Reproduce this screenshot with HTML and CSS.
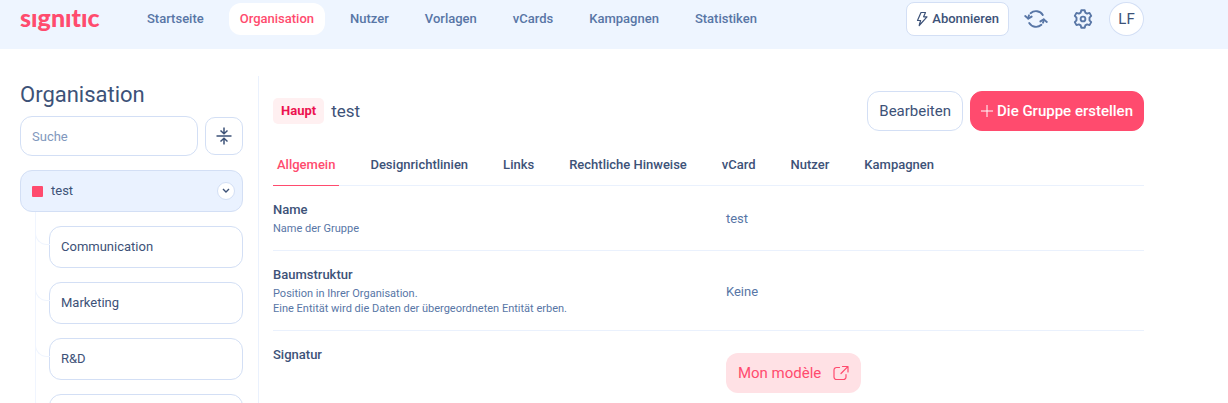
FILE: index.html
```html
<!DOCTYPE html>
<html lang="de">
<head>
    <meta charset="UTF-8">
    <meta name="viewport" content="width=device-width, initial-scale=1.0">
    <title>Organisation</title>
    <link rel="stylesheet" href="styles.css">
</head>
<body>
    <header class="topbar">
        <a class="logo" href="#" aria-label="signitic">sıgnıtıc</a>
        <nav class="nav">
            <a class="nav-link" href="#">Startseite</a>
            <a class="nav-link active" href="#">Organisation</a>
            <a class="nav-link" href="#">Nutzer</a>
            <a class="nav-link" href="#">Vorlagen</a>
            <a class="nav-link" href="#">vCards</a>
            <a class="nav-link" href="#">Kampagnen</a>
            <a class="nav-link" href="#">Statistiken</a>
        </nav>
        <div class="topbar-actions">
            <button class="btn-subscribe">
                <svg width="12" height="16" viewBox="0 0 12 16" fill="none" stroke="currentColor" stroke-width="1.2" stroke-linejoin="round"><path d="M5 1.5h4.5L7.6 5.8H11L3.2 14.5l1.4-5H1.5z"/></svg>
                Abonnieren
            </button>
            <button class="btn-icon" aria-label="Synchronisieren">
                <svg width="24" height="20" viewBox="0 0 24 20" fill="none" stroke="currentColor" stroke-width="1.9" stroke-linecap="round" stroke-linejoin="round"><path d="M6.600 4.200A8 8 0 0 1 18.800 6M17.400 15.800A8 8 0 0 1 5.200 14"/><path d="M4.200 9.500A8 8 0 0 1 5 6.300M19.800 10.500A8 8 0 0 1 19 13.700"/><path d="M1.200 7l3 2.600L7.600 7.600M16.400 12.400l3.400-2 3 2.600"/></svg>
            </button>
            <button class="btn-icon" aria-label="Einstellungen">
                <svg width="20" height="20" viewBox="0 0 20 20" fill="none" stroke="currentColor" stroke-width="1.9" stroke-linejoin="round"><path d="M8.3 1.2h3.4l.6 2.4 1.8 1 2.4-.7 1.7 3-1.7 1.800v2.600l1.700 1.800-1.700 3-2.400-.7-1.800 1-.6 2.400H8.300l-.6-2.400-1.800-1-2.400.7-1.700-3 1.700-1.800V8.700L1.800 6.900l1.700-3 2.400.7 1.800-1z"/><circle cx="10" cy="10" r="2.4"/></svg>
            </button>
            <button class="avatar">LF</button>
        </div>
    </header>

    <div class="page">
        <aside class="sidebar">
            <h1 class="sidebar-title">Organisation</h1>
            <div class="search">
                <input class="search-input" type="text" placeholder="Suche" aria-label="Suche">
                <button class="btn-collapse" aria-label="Alle einklappen">
                    <svg width="16" height="18" viewBox="0 0 16 18" fill="none" stroke="currentColor" stroke-width="1.5"><path d="M.5 9h15M8 .5v6M4.5 3.5L8 6.800l3.500-3.300M8 17.500v-6M4.500 14.500L8 11.200l3.500 3.300"/></svg>
                </button>
            </div>
            <div class="node node-root">
                <span class="node-color"></span>
                <span class="node-name">test</span>
                <button class="node-toggle" aria-label="Einklappen">
                    <svg width="8" height="6" viewBox="0 0 8 6" fill="none" stroke="currentColor" stroke-width="1.4"><path d="M1 1l3 3 3-3"/></svg>
                </button>
            </div>
            <ul class="tree">
                <li class="tree-item"><a class="node" href="#">Communication</a></li>
                <li class="tree-item"><a class="node" href="#">Marketing</a></li>
                <li class="tree-item"><a class="node" href="#">R&amp;D</a></li>
                <li class="tree-item"><a class="node" href="#"></a></li>
            </ul>
        </aside>

        <main class="content">
            <div class="content-header">
                <span class="badge">Haupt</span>
                <h2 class="content-title">test</h2>
                <button class="btn btn-outline">Bearbeiten</button>
                <button class="btn btn-primary">
                    <svg width="12" height="12" viewBox="0 0 12 12" stroke="currentColor"><path d="M6 0v12M0 6h12"/></svg>
                    Die Gruppe erstellen
                </button>
            </div>

            <nav class="tabs">
                <a class="tab active" href="#">Allgemein</a>
                <a class="tab" href="#">Designrichtlinien</a>
                <a class="tab" href="#">Links</a>
                <a class="tab" href="#">Rechtliche Hinweise</a>
                <a class="tab" href="#">vCard</a>
                <a class="tab" href="#">Nutzer</a>
                <a class="tab" href="#">Kampagnen</a>
            </nav>

            <dl class="details">
                <div class="row">
                    <dt class="row-label">Name
                        <span class="row-help">Name der Gruppe</span>
                    </dt>
                    <dd class="row-value">test</dd>
                </div>
                <div class="row">
                    <dt class="row-label">Baumstruktur
                        <span class="row-help">Position in Ihrer Organisation.<br>Eine Entität wird die Daten der übergeordneten Entität erben.</span>
                    </dt>
                    <dd class="row-value">Keine</dd>
                </div>
                <div class="row">
                    <dt class="row-label">Signatur</dt>
                    <dd class="row-value">
                        <a class="btn-template" href="#">Mon modèle
                            <svg width="16" height="16" viewBox="0 0 16 16" fill="none" stroke="currentColor" stroke-width="1.2" stroke-linecap="round" stroke-linejoin="round"><path d="M6.500 2.500H3.500a2.500 2.500 0 0 0-2.500 2.500V12a2.500 2.500 0 0 0 2.500 2.500h7A2.500 2.500 0 0 0 13 12V9.500M9.500 1.500H15V7M14.800 1.700L8 8.500"/></svg>
                        </a>
                    </dd>
                </div>
            </dl>
        </main>
    </div>
</body>
</html>
```
FILE: styles.css
```css
* {
    margin: 0;
    padding: 0;
    box-sizing: border-box;
}

body {
    font-family: Roboto, sans-serif;
    font-size: 13px;
    line-height: 16px;
    color: #3d5278;
    background: #fff;
    overflow: hidden;
}

a {
    color: inherit;
    text-decoration: none;
}

button,
input {
    font: inherit;
    color: inherit;
}

button {
    cursor: pointer;
}

svg {
    display: block;
    flex-shrink: 0;
}

/* top bar */
.topbar {
    display: flex;
    align-items: flex-start;
    padding: 2px 84px 13px 20px;
    background: #eef5ff;
}

.logo {
    width: 80px;
    font-family: Lato, sans-serif;
    font-size: 25px;
    font-weight: 900;
    font-variant-ligatures: none;
    line-height: 30px;
    color: #ff4b6e;
}

.nav {
    display: flex;
    gap: 14px;
    margin-left: 36px;
    padding-top: 1px;
}

.nav-link {
    padding: 8px 11px;
    border-radius: 12px;
    font-weight: 500;
    color: #5876a6;
}

.nav-link.active {
    background: #fff;
    color: #ff4b6e;
}

.topbar-actions {
    display: flex;
    align-items: center;
    margin-left: auto;
}

.btn-subscribe {
    display: flex;
    align-items: center;
    gap: 4px;
    height: 34px;
    padding: 0 9px;
    margin-right: 3px;
    border: 1px solid #d3dff5;
    border-radius: 8px;
    background: #fff;
    font-weight: 500;
}

.btn-icon {
    display: flex;
    align-items: center;
    justify-content: center;
    width: 47px;
    border: none;
    background: none;
    color: #5876a6;
}

.avatar {
    width: 35px;
    height: 34px;
    margin-left: 3px;
    border: 1px solid #d3dff5;
    border-radius: 50%;
    background: #fff;
    font-size: 15px;
}

/* sidebar */
.page {
    display: flex;
    padding: 27px 84px 0 20px;
}

.sidebar {
    flex: 0 0 239px;
    min-width: 0;
    padding: 5px 15px 0 0;
    border-right: 1px solid #eaf1fd;
}

.sidebar-title {
    margin-bottom: 7px;
    font-size: 22px;
    font-weight: 400;
    line-height: 28px;
}

.search {
    display: flex;
    align-items: center;
    gap: 7px;
    margin-bottom: 14px;
}

.search-input {
    flex: 1;
    min-width: 0;
    height: 40px;
    padding: 0 11px;
    border: 1px solid #d3dff5;
    border-radius: 12px;
    background: #fff;
}

.search-input::placeholder {
    color: #8198bd;
}

.btn-collapse {
    display: flex;
    align-items: center;
    justify-content: center;
    width: 38px;
    height: 38px;
    border: 1px solid #d3dff5;
    border-radius: 10px;
    background: #fff;
}

.node {
    display: flex;
    align-items: center;
    height: 42px;
    padding: 0 11px;
    border: 1px solid #d3dff5;
    border-radius: 12px;
    background: #fff;
}

.node-root {
    gap: 8px;
    padding-right: 7px;
    background: #eaf2ff;
}

.node-color {
    width: 11px;
    height: 11px;
    border-radius: 1px;
    background: #ff4b6e;
}

.node-toggle {
    display: flex;
    align-items: center;
    justify-content: center;
    width: 18px;
    height: 18px;
    margin-left: auto;
    border: 1px solid #d3dff5;
    border-radius: 50%;
    background: #fff;
}

.tree {
    margin-left: 15px;
    list-style: none;
    border-left: 1px solid #f0f5fe;
}

.tree-item {
    position: relative;
    padding: 14px 0 0 13px;
}

/* curved branch from the trunk to the node */
.tree-item::before {
    content: '';
    position: absolute;
    top: 16px;
    left: -1px;
    width: 14px;
    height: 16px;
    border-left: 1px solid #f0f5fe;
    border-bottom: 1px solid #f0f5fe;
    border-bottom-left-radius: 12px;
}

/* content */
.content {
    flex: 1;
    min-width: 0;
    padding: 15px 0 0 14px;
}

.content-header {
    display: flex;
    align-items: center;
    gap: 7px;
}

.badge {
    padding: 5px 8px;
    border-radius: 5px;
    background: #fff0f1;
    font-weight: 700;
    color: #ec1350;
}

.content-title {
    margin-right: auto;
    font-size: 17px;
    font-weight: 400;
}

.btn {
    display: flex;
    align-items: center;
    gap: 4px;
    height: 40px;
    padding: 0 11px;
    border: 1px solid #d3dff5;
    border-radius: 12px;
    background: #fff;
    font-size: 15px;
}

.btn-primary {
    padding: 0 10px;
    border-color: #ff4b6e;
    background: #ff4b6e;
    font-weight: 500;
    color: #fff;
}

.tabs {
    display: flex;
    gap: 27px;
    margin-top: 26px;
    border-bottom: 1px solid #eaf1fd;
}

.tab {
    padding: 0 4px 12px;
    margin-bottom: -1px;
    border-bottom: 1px solid transparent;
    font-weight: 500;
}

.tab.active {
    border-color: #ff4b6e;
    color: #ff4b6e;
}

.row {
    display: grid;
    grid-template-columns: 52% 48%;
    padding: 16px 0 14px;
    border-bottom: 1px solid #eaf1fd;
}

.row-label {
    font-weight: 500;
}

.row-help {
    display: block;
    margin-top: 3px;
    font-size: 11px;
    font-weight: 400;
    line-height: 15px;
    color: #5876a6;
}

.row-value {
    align-self: center;
    color: #5876a6;
}

.btn-template {
    display: inline-flex;
    align-items: center;
    gap: 12px;
    height: 40px;
    margin-top: 6px;
    padding: 0 12px;
    border-radius: 12px;
    background: #ffe1e5;
    font-size: 15px;
    color: #ff4b6e;
}
```
